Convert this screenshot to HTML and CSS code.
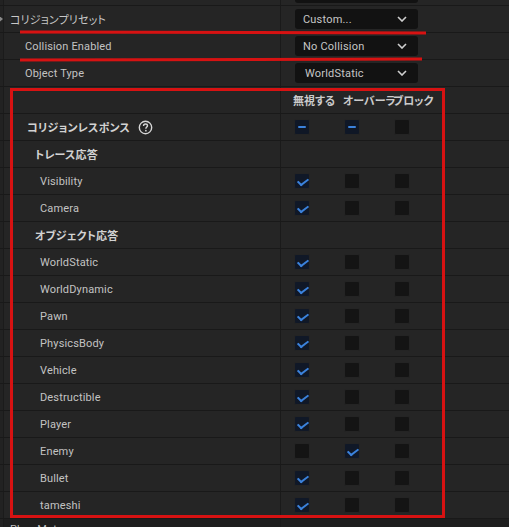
FILE: index.html
```html
<!DOCTYPE html>
<html lang="ja">
<head>
<meta charset="utf-8">
<title>Collision</title>
<link rel="stylesheet" href="styles.css">
</head>
<body>
<div class="panel">
  <div class="row row-top"><div class="name"></div><div class="value"><div class="combo-stub"></div></div></div>

  <div class="row"><div class="name lvl0"><span class="expander"></span>コリジョンプリセット</div>
    <div class="value"><div class="combo"><span>Custom...</span><svg class="chev" viewBox="0 0 10 6" width="10" height="6"><path d="M1 1 L5 5 L9 1" fill="none" stroke="#cfcfcf" stroke-width="1.6"/></svg></div></div></div>

  <div class="row"><div class="name lvl1">Collision Enabled</div>
    <div class="value"><div class="combo"><span>No Collision</span><svg class="chev" viewBox="0 0 10 6" width="10" height="6"><path d="M1 1 L5 5 L9 1" fill="none" stroke="#cfcfcf" stroke-width="1.6"/></svg></div></div></div>

  <div class="row"><div class="name lvl1">Object Type</div>
    <div class="value"><div class="combo"><span class="combo-text-wide">WorldStatic</span><svg class="chev" viewBox="0 0 10 6" width="10" height="6"><path d="M1 1 L5 5 L9 1" fill="none" stroke="#cfcfcf" stroke-width="1.6"/></svg></div></div></div>

  <div class="row"><div class="name"></div>
    <div class="value cols head"><span class="col">無視する</span><span class="col">オーバーラ</span><span class="col">ブロック</span></div></div>

  <div class="row"><div class="name sec">コリジョンレスポンス<svg class="help" viewBox="0 0 16 16" width="15" height="15"><circle cx="8" cy="8" r="6.6" fill="none" stroke="#d6d6d6" stroke-width="1.5"/><path d="M5.9 6.3 C5.9 4.9 6.9 4.2 8 4.2 C9.2 4.2 10.1 5 10.1 6.1 C10.1 7.4 8.4 7.6 8.4 9.2" fill="none" stroke="#d6d6d6" stroke-width="1.5"/><circle cx="8.4" cy="11.4" r="0.9" fill="#d6d6d6"/></svg></div>
    <div class="value cols"><span class="col"><i class="cb mixed"></i></span><span class="col"><i class="cb mixed"></i></span><span class="col"><i class="cb"></i></span></div></div>

  <div class="row"><div class="name sub">トレース応答</div><div class="value"></div></div>

  <div class="row"><div class="name item">Visibility</div>
    <div class="value cols"><span class="col"><i class="cb on"></i></span><span class="col"><i class="cb"></i></span><span class="col"><i class="cb"></i></span></div></div>
  <div class="row"><div class="name item">Camera</div>
    <div class="value cols"><span class="col"><i class="cb on"></i></span><span class="col"><i class="cb"></i></span><span class="col"><i class="cb"></i></span></div></div>

  <div class="row"><div class="name sub">オブジェクト応答</div><div class="value"></div></div>

  <div class="row"><div class="name item">WorldStatic</div>
    <div class="value cols"><span class="col"><i class="cb on"></i></span><span class="col"><i class="cb"></i></span><span class="col"><i class="cb"></i></span></div></div>
  <div class="row"><div class="name item">WorldDynamic</div>
    <div class="value cols"><span class="col"><i class="cb on"></i></span><span class="col"><i class="cb"></i></span><span class="col"><i class="cb"></i></span></div></div>
  <div class="row"><div class="name item">Pawn</div>
    <div class="value cols"><span class="col"><i class="cb on"></i></span><span class="col"><i class="cb"></i></span><span class="col"><i class="cb"></i></span></div></div>
  <div class="row"><div class="name item">PhysicsBody</div>
    <div class="value cols"><span class="col"><i class="cb on"></i></span><span class="col"><i class="cb"></i></span><span class="col"><i class="cb"></i></span></div></div>
  <div class="row"><div class="name item">Vehicle</div>
    <div class="value cols"><span class="col"><i class="cb on"></i></span><span class="col"><i class="cb"></i></span><span class="col"><i class="cb"></i></span></div></div>
  <div class="row"><div class="name item">Destructible</div>
    <div class="value cols"><span class="col"><i class="cb on"></i></span><span class="col"><i class="cb"></i></span><span class="col"><i class="cb"></i></span></div></div>
  <div class="row"><div class="name item">Player</div>
    <div class="value cols"><span class="col"><i class="cb on"></i></span><span class="col"><i class="cb"></i></span><span class="col"><i class="cb"></i></span></div></div>
  <div class="row"><div class="name item">Enemy</div>
    <div class="value cols"><span class="col"><i class="cb"></i></span><span class="col"><i class="cb on"></i></span><span class="col"><i class="cb"></i></span></div></div>
  <div class="row"><div class="name item">Bullet</div>
    <div class="value cols"><span class="col"><i class="cb on"></i></span><span class="col"><i class="cb"></i></span><span class="col"><i class="cb"></i></span></div></div>
  <div class="row"><div class="name item">tameshi</div>
    <div class="value cols"><span class="col"><i class="cb on"></i></span><span class="col"><i class="cb"></i></span><span class="col"><i class="cb"></i></span></div></div>

  <div class="row row-bottom"><div class="name lvl0b">Phys Mat</div><div class="value"></div></div>
</div>

<div class="mark mark-line1"></div>
<div class="mark mark-line2"></div>
<div class="mark mark-box"></div>
</body>
</html>
```

FILE: styles.css
```css
html, body {
  margin: 0;
  padding: 0;
}
body {
  position: relative;
  width: 509px;
  height: 527px;
  overflow: hidden;
  background: #1c1c1c;
  font-family: Roboto, "Noto Sans CJK JP", sans-serif;
  font-size: 11px;
  color: #c3c3c3;
  font-feature-settings: "palt";
}
.panel {
  display: flex;
  flex-direction: column;
}
.row {
  display: grid;
  grid-template-columns: 281px 1fr;
  height: 26px;
  border-bottom: 1px solid #191919;
  background: #252525;
}
.row-top {
  height: 5px;
}
.row-bottom {
  background: #1e1e1e;
  border-bottom: none;
}
.name {
  display: flex;
  align-items: center;
  border-right: 1px solid #1a1a1a;
  box-shadow: inset 3px 0 0 #222, inset 4px 0 0 #1b1b1b;
  white-space: nowrap;
  letter-spacing: 0.15px;
}
.value {
  display: flex;
  align-items: center;
  padding-left: 13px;
}
.row-top .value {
  align-items: flex-start;
}
.combo-stub {
  width: 123px;
  height: 3px;
  margin-left: 1px;
  background: #121212;
  border-radius: 0 0 3px 3px;
}
.lvl0 {
  padding-left: 0;
  font-size: 11px;
  color: #c8c8c8;
}
.expander {
  width: 3px;
  height: 5px;
  margin-right: 7px;
  background: #8a8a8a;
  clip-path: polygon(0 0, 100% 50%, 0 100%);
}
.lvl1 {
  padding-left: 25px;
}
.lvl0b {
  padding-left: 10px;
  align-items: flex-start;
  padding-top: 4px;
  color: #bdbdbd;
}
.sec {
  padding-left: 27px;
  font-size: 11px;
  font-weight: bold;
  color: #d2d2d2;
}
.help {
  margin-left: 8px;
}
.sub {
  padding-left: 35px;
  font-size: 11px;
  font-weight: bold;
  color: #d2d2d2;
}
.item {
  padding-left: 40px;
}
.combo {
  display: flex;
  align-items: center;
  justify-content: space-between;
  width: 123px;
  height: 20px;
  margin-left: 1px;
  box-sizing: border-box;
  padding: 0 11px 0 8px;
  background: #121212;
  border-radius: 3px;
  color: #c6c6c6;
  letter-spacing: 0.2px;
}
.combo-text-wide {
  padding-left: 2px;
}
.chev {
  display: block;
}
.cols {
  display: grid;
  grid-template-columns: repeat(3, 50px);
  align-items: center;
  padding-left: 13px;
}
.col {
  display: flex;
  align-items: center;
  white-space: nowrap;
}
.head .col {
  font-size: 11px;
  font-weight: bold;
  color: #cbcbcb;
  margin-left: -1px;
  letter-spacing: 0;
}
.cb {
  display: block;
  width: 16px;
  height: 16px;
  box-sizing: border-box;
  background: #141414;
  border: 1px solid #242424;
  border-radius: 2px;
  position: relative;
}
.cb.on {
  background: #101827;
}
.cb.on::after {
  content: "";
  position: absolute;
  left: 5px;
  top: 2px;
  width: 4px;
  height: 8px;
  border-right: 2px solid #3b82dc;
  border-bottom: 2px solid #3b82dc;
  transform: rotate(45deg) skewX(-8deg);
  transform-origin: center;
}
.cb.mixed {
  background: #0f1726;
}
.cb.mixed::after {
  content: "";
  position: absolute;
  left: 3px;
  top: 6px;
  width: 8px;
  height: 2px;
  background: #3b82dc;
  border-radius: 1px;
}
.mark {
  position: absolute;
  background: #d71212;
}
.mark-line1 {
  left: 20px;
  top: 31px;
  width: 406px;
  height: 3px;
  transform: rotate(0.12deg);
}
.mark-line2 {
  left: 20px;
  top: 58px;
  width: 402px;
  height: 3px;
  transform: rotate(-0.12deg);
}
.mark-box {
  left: 10px;
  top: 88px;
  width: 435px;
  height: 430px;
  box-sizing: border-box;
  background: transparent;
  border: 3px solid #d71212;
}
```
